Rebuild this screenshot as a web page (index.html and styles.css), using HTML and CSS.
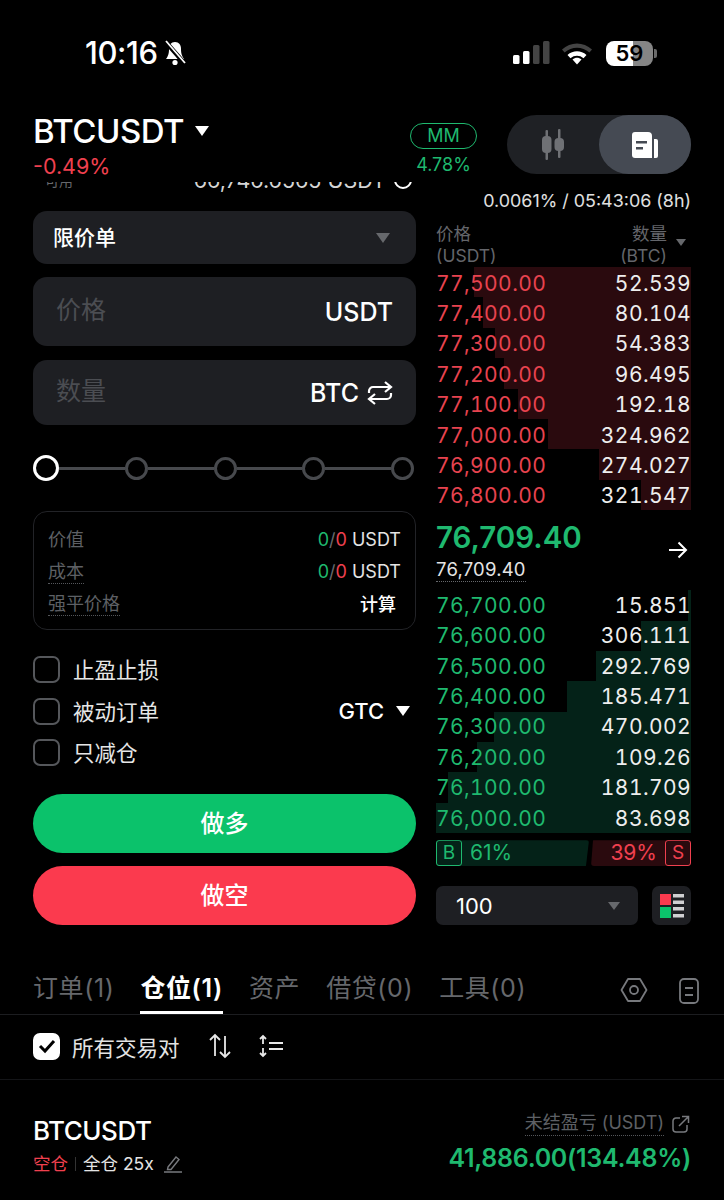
FILE: index.html
```html
<!DOCTYPE html>
<html lang="zh-CN">
<head>
    <meta charset="UTF-8">
    <meta name="viewport" content="width=device-width, initial-scale=1.0">
    <title>BTCUSDT</title>
    <link rel="stylesheet" href="styles.css">
</head>
<body>
    <div class="status-bar">
        <div class="status-left">
            <span class="clock">10:16</span>
            <svg class="bell" width="24" height="26" viewBox="0 0 24 26">
                <path d="M12 2c-4 0-6 3-6 7 0 5-1 7-3 10h18c-2-3-3-5-3-10 0-4-2-7-6-7z" fill="#fff"/>
                <circle cx="12" cy="22.5" r="2.6" fill="#fff"/>
                <path d="M2 1l20 23" stroke="#000" stroke-width="4.5"/>
                <path d="M3 1l19 22" stroke="#fff" stroke-width="1.8"/>
            </svg>
        </div>
        <div class="status-right">
            <svg width="38" height="24" viewBox="0 0 38 24">
                <rect x="0" y="14" width="6.500" height="9" rx="1.5" fill="#fff"/>
                <rect x="10" y="10" width="6.500" height="13" rx="1.5" fill="#fff"/>
                <rect x="20" y="4" width="6.500" height="19" rx="1.5" fill="#444"/>
                <rect x="30" y="0" width="6.500" height="23" rx="1.5" fill="#444"/>
            </svg>
            <svg width="32" height="24" viewBox="0 0 32 24">
                <path d="M1 8.500c8.500-8 21.500-8 30 0l-2.600 3c-7-6.500-17.800-6.500-24.800 0z" fill="#444"/>
                <path d="M6.500 14c5.500-5 13.500-5 19 0l-3 3.300c-3.800-3.300-9.200-3.300-13 0z" fill="#fff"/>
                <path d="M11.500 18.500c2.800-2.200 6.200-2.200 9 0L16 23.500z" fill="#fff"/>
            </svg>
            <div class="battery"><span>59</span></div>
            <div class="battery-cap"></div>
        </div>
    </div>

    <div class="header">
        <div class="symbol">
            <div class="symbol-name">BTCUSDT <span class="tri-white"></span></div>
            <div class="symbol-change">-0.49%</div>
        </div>
        <div class="margin-info">
            <div class="mm-badge">MM</div>
            <div class="mm-value">4.78%</div>
        </div>
        <div class="view-toggle">
            <div class="toggle-item">
                <svg width="28" height="32" viewBox="0 0 28 32" fill="#6f7175">
                    <rect x="6.500" y="1" width="2.500" height="30" rx="1"/>
                    <rect x="3" y="7" width="9.500" height="17" rx="4"/>
                    <rect x="19" y="0" width="2.500" height="29" rx="1"/>
                    <rect x="15.500" y="9" width="9.500" height="13" rx="4"/>
                </svg>
            </div>
            <div class="toggle-item toggle-active">
                <svg width="28" height="28" viewBox="0 0 28 28">
                    <path d="M4 1h13a4 4 0 0 1 4 4v22H4a3 3 0 0 1-3-3V4a3 3 0 0 1 3-3z" fill="#fff"/>
                    <path d="M23 8h2a2 2 0 0 1 2 2v15a2 2 0 0 1-2 2h-2z" fill="#fff"/>
                    <rect x="5" y="10" width="11" height="2.500" fill="#454a53"/>
                    <rect x="5" y="16" width="7" height="2.500" fill="#454a53"/>
                </svg>
            </div>
        </div>
    </div>

    <div class="trade">
        <div class="order-form">
            <div class="avail">
                <div class="avail-inner">
                    <span class="avail-label">可用</span>
                    <span class="avail-value">66,746.6565 USDT</span>
                    <span class="avail-icon"></span>
                </div>
            </div>

            <div class="select-box">
                <span class="select-text">限价单</span>
                <span class="tri-grey"></span>
            </div>
            <div class="field field-price">
                <span class="placeholder">价格</span>
                <span class="unit">USDT</span>
            </div>
            <div class="field field-qty">
                <span class="placeholder">数量</span>
                <span class="unit">BTC
                    <svg width="26" height="26" viewBox="0 0 26 26" fill="none" stroke="#fff" stroke-width="2.200">
                        <path d="M18 2l6 5-6 5M24 7H6a4 4 0 0 0-4 4v2M8 24l-6-5 6-5M2 19h18a4 4 0 0 0 4-4v-2"/>
                    </svg>
                </span>
            </div>

            <div class="slider">
                <span class="dot dot-active"></span><span class="line"></span>
                <span class="dot"></span><span class="line"></span>
                <span class="dot"></span><span class="line"></span>
                <span class="dot"></span><span class="line"></span>
                <span class="dot"></span>
            </div>

            <div class="summary">
                <div class="summary-row">
                    <span class="summary-label">价值</span>
                    <span><span class="green">0</span><span class="dim">/</span><span class="red">0</span> USDT</span>
                </div>
                <div class="summary-row">
                    <span class="summary-label dotted">成本</span>
                    <span><span class="green">0</span><span class="dim">/</span><span class="red">0</span> USDT</span>
                </div>
                <div class="summary-row">
                    <span class="summary-label dotted">强平价格</span>
                    <span class="calc">计算</span>
                </div>
            </div>

            <div class="options">
                <div class="option"><span class="checkbox"></span><span class="option-text">止盈止损</span></div>
                <div class="option">
                    <span class="checkbox"></span><span class="option-text">被动订单</span>
                    <span class="tif">GTC <span class="tri-white tri-small"></span></span>
                </div>
                <div class="option"><span class="checkbox"></span><span class="option-text">只减仓</span></div>
            </div>

            <div class="btn btn-long">做多</div>
            <div class="btn btn-short">做空</div>
        </div>

        <div class="book">
            <div class="funding">0.0061% / 05:43:06 (8h)</div>
            <div class="book-head">
                <div>价格<br>(USDT)</div>
                <div class="book-head-right">
                    <div>数量<br>(BTC)</div>
                    <span class="tri-grey tri-head"></span>
                </div>
            </div>

            <div class="rows asks">
                <div class="row"><i class="bar" style="width:85.1%"></i><span class="price">77,500.00</span><span class="qty">52.539</span></div>
                <div class="row"><i class="bar" style="width:81.6%"></i><span class="price">77,400.00</span><span class="qty">80.104</span></div>
                <div class="row"><i class="bar" style="width:76.9%"></i><span class="price">77,300.00</span><span class="qty">54.383</span></div>
                <div class="row"><i class="bar" style="width:73.3%"></i><span class="price">77,200.00</span><span class="qty">96.495</span></div>
                <div class="row"><i class="bar" style="width:67.8%"></i><span class="price">77,100.00</span><span class="qty">192.18</span></div>
                <div class="row"><i class="bar" style="width:56.1%"></i><span class="price">77,000.00</span><span class="qty">324.962</span></div>
                <div class="row"><i class="bar" style="width:36.1%"></i><span class="price">76,900.00</span><span class="qty">274.027</span></div>
                <div class="row"><i class="bar" style="width:19.6%"></i><span class="price">76,800.00</span><span class="qty">321.547</span></div>
            </div>

            <div class="mid">
                <div>
                    <div class="mid-price">76,709.40</div>
                    <div class="mid-mark">76,709.40</div>
                </div>
                <svg class="mid-arrow" width="20" height="18" viewBox="0 0 20 18" fill="none" stroke="#fff" stroke-width="2">
                    <path d="M1 9h17M10.500 1.500L18 9l-7.500 7.500"/>
                </svg>
            </div>

            <div class="rows bids">
                <div class="row"><i class="bar" style="width:1.2%"></i><span class="price">76,700.00</span><span class="qty">15.851</span></div>
                <div class="row"><i class="bar" style="width:19.6%"></i><span class="price">76,600.00</span><span class="qty">306.111</span></div>
                <div class="row"><i class="bar" style="width:37.3%"></i><span class="price">76,500.00</span><span class="qty">292.769</span></div>
                <div class="row"><i class="bar" style="width:48.6%"></i><span class="price">76,400.00</span><span class="qty">185.471</span></div>
                <div class="row"><i class="bar" style="width:77.3%"></i><span class="price">76,300.00</span><span class="qty">470.002</span></div>
                <div class="row"><i class="bar" style="width:83.9%"></i><span class="price">76,200.00</span><span class="qty">109.26</span></div>
                <div class="row"><i class="bar" style="width:95.3%"></i><span class="price">76,100.00</span><span class="qty">181.709</span></div>
                <div class="row"><i class="bar" style="width:100%"></i><span class="price">76,000.00</span><span class="qty">83.698</span></div>
            </div>

            <div class="ratio">
                <div class="ratio-buy"><span class="ratio-tag">B</span><span>61%</span></div>
                <div class="ratio-sell"><span>39%</span><span class="ratio-tag">S</span></div>
            </div>

            <div class="book-controls">
                <div class="depth-select">
                    <span>100</span>
                    <span class="tri-grey tri-depth"></span>
                </div>
                <div class="layout-btn">
                    <svg width="26" height="26" viewBox="0 0 26 26">
                        <rect x="1" y="1" width="11" height="11" fill="#fb3a4e"/>
                        <rect x="1" y="14" width="11" height="11" fill="#0bc26b"/>
                        <rect x="14" y="1" width="11" height="3.500" fill="#d0d0d2"/>
                        <rect x="14" y="7.500" width="11" height="3.500" fill="#d0d0d2"/>
                        <rect x="14" y="14" width="11" height="3.500" fill="#d0d0d2"/>
                        <rect x="14" y="21" width="11" height="3.500" fill="#d0d0d2"/>
                    </svg>
                </div>
            </div>
        </div>
    </div>

    <div class="tabs">
        <div class="tab">订单(1)</div>
        <div class="tab tab-active">仓位(1)</div>
        <div class="tab">资产</div>
        <div class="tab">借贷(0)</div>
        <div class="tab">工具(0)</div>
        <div class="tab-icons">
            <svg width="28" height="26" viewBox="0 0 28 26" fill="none" stroke="#77797d" stroke-width="1.800">
                <path d="M8 2h12l6.500 11L20 24H8L1.500 13z" stroke-linejoin="round"/>
                <circle cx="14" cy="13" r="4"/>
            </svg>
            <svg width="22" height="28" viewBox="0 0 22 28" fill="none" stroke="#77797d" stroke-width="1.800">
                <rect x="2" y="2" width="18" height="24" rx="4"/>
                <path d="M7 11h8M7 18h8"/>
            </svg>
        </div>
    </div>

    <div class="toolbar">
        <span class="checkbox checkbox-on">
            <svg width="18" height="16" viewBox="0 0 18 16" fill="none" stroke="#000" stroke-width="3">
                <path d="M2 8l5 5 9-10"/>
            </svg>
        </span>
        <span class="toolbar-label">所有交易对</span>
        <svg class="tool-sort" width="24" height="26" viewBox="0 0 24 26" fill="none" stroke="#e8e8e8" stroke-width="1.800">
            <path d="M7 23V2M2 7l5-5 5 5M17 3v21M12 19l5 5 5-5"/>
        </svg>
        <svg class="tool-filter" width="26" height="24" viewBox="0 0 26 24" fill="none" stroke="#e8e8e8" stroke-width="1.800">
            <path d="M5 10V2M2 5l3-3 3 3M5 14v8M2 19l3 3 3-3M11 9h14M11 15h14"/>
        </svg>
    </div>

    <div class="position">
        <div>
            <div class="pos-symbol">BTCUSDT</div>
            <div class="pos-tags">
                <span class="red">空仓</span>
                <span class="pos-sep"></span>
                <span>全仓 25x</span>
                <svg class="pos-edit" width="20" height="18" viewBox="0 0 20 18" fill="none" stroke="#77797d" stroke-width="1.400">
                    <path d="M5 12L13 2l3 2.500-8 10-3.500 0zM1 17h18"/>
                </svg>
            </div>
        </div>
        <div class="pos-right">
            <div class="pnl-label">
                <span class="dotted">未结盈亏 (USDT)</span>
                <svg width="18" height="18" viewBox="0 0 18 18" fill="none" stroke="#77797d" stroke-width="1.500">
                    <path d="M8 3H4a3 3 0 0 0-3 3v8a3 3 0 0 0 3 3h8a3 3 0 0 0 3-3v-4M7 11L16 2M10 1.500h6.500V8"/>
                </svg>
            </div>
            <div class="pnl-value">41,886.00(134.48%)</div>
        </div>
    </div>
</body>
</html>
```

FILE: styles.css
```css
body {
    margin: 0;
    width: 724px;
    height: 1200px;
    overflow: hidden;
    background: #000;
    color: #fff;
    font-family: Inter, "Noto Sans CJK SC", sans-serif;
}
.green {
    color: #1fb96f;
}
.red {
    color: #f0404f;
}
.dim {
    color: #66686c;
}
.dotted {
    border-bottom: 1px dotted #55575b;
}

/* triangles */
.tri-white, .tri-grey {
    display: inline-block;
    width: 0;
    height: 0;
    border-left: 7px solid transparent;
    border-right: 7px solid transparent;
}
.tri-white {
    border-top: 10px solid #fff;
}
.tri-grey {
    border-top: 10px solid #66686c;
}

/* status bar */
.status-bar {
    height: 108px;
    display: flex;
    justify-content: space-between;
    align-items: flex-start;
    padding: 37px 67px 0 85px;
    box-sizing: border-box;
}
.status-left {
    display: flex;
    align-items: center;
    gap: 5px;
}
.clock {
    font-size: 31px;
    font-weight: 500;
    line-height: 32px;
    letter-spacing: -0.4px;
}
.status-right {
    display: flex;
    align-items: center;
    gap: 10px;
    height: 32px;
}
.battery {
    width: 47px;
    height: 25px;
    margin-left: 3px;
    border-radius: 8px;
    background: linear-gradient(90deg, #fff 0, #fff 58%, #858585 58%, #858585 100%);
    color: #000;
    font-size: 22px;
    font-weight: 600;
    line-height: 25px;
    text-align: center;
}
.battery-cap {
    width: 3px;
    height: 9px;
    margin-left: -9px;
    border-radius: 0 2px 2px 0;
    background: #6a6a6a;
}

/* header */
.header {
    height: 70px;
    padding: 7px 33px 0;
    box-sizing: border-box;
    display: flex;
    align-items: flex-start;
}
.symbol {
    flex-grow: 1;
}
.symbol-name {
    font-size: 33px;
    font-weight: 500;
    line-height: 30px;
    margin-top: 1px;
    letter-spacing: -0.5px;
}
.symbol-name .tri-white {
    vertical-align: 7px;
    margin-left: 3px;
}
.symbol-change {
    font-size: 21.500px;
    line-height: 26px;
    color: #f0404f;
    margin-top: 7px;
}
.margin-info {
    width: 67px;
    margin-top: 8px;
    margin-right: 30px;
    text-align: center;
}
.mm-badge {
    height: 24px;
    border: 1px solid #1fb96f;
    border-radius: 13px;
    color: #1fb96f;
    font-size: 18px;
    line-height: 24px;
}
.mm-value {
    margin-top: 4px;
    font-size: 18px;
    line-height: 24px;
    color: #1fb96f;
}
.view-toggle {
    width: 184px;
    height: 59px;
    display: flex;
    background: #1f2125;
    border-radius: 30px;
}
.toggle-item {
    width: 92px;
    display: flex;
    align-items: center;
    justify-content: center;
}
.toggle-active {
    background: #454a53;
    border-radius: 30px;
}

/* two columns */
.trade {
    display: flex;
    gap: 20px;
    padding: 0 33px;
}
.order-form {
    width: 383px;
}
.book {
    width: 255px;
}

/* order form, the balance row is cut off by the scroll area above it */
.avail {
    height: 11px;
    overflow: hidden;
    margin-top: 4px;
    margin-bottom: 18px;
}
.avail-inner {
    display: flex;
    align-items: center;
    height: 26px;
    margin-top: -15px;
    padding: 0 4px 0 12px;
    font-size: 21.500px;
    color: #d5d5d5;
}
.avail-label {
    flex-grow: 1;
    font-size: 14px;
    color: #66686c;
}
.avail-value {
    margin-right: 8px;
}
.avail-icon {
    width: 14px;
    height: 14px;
    border: 2px solid #fff;
    border-radius: 50%;
}
.select-box {
    height: 53px;
    padding: 0 26px 0 20px;
    display: flex;
    align-items: center;
    justify-content: space-between;
    background: #1e1f23;
    border-radius: 14px;
    font-size: 21px;
    font-weight: 500;
}
.select-text {
    margin-bottom: 4px;
}
.field {
    padding: 0 23px 0 23px;
    display: flex;
    align-items: center;
    justify-content: space-between;
    background: #1e1f23;
    border-radius: 14px;
}
.field-price {
    height: 69px;
    margin-top: 13px;
}
.field-qty {
    height: 65px;
    margin-top: 14px;
}
.placeholder {
    margin-bottom: 7px;
    font-size: 25px;
    color: #4b4d52;
}
.unit {
    display: flex;
    align-items: center;
    gap: 8px;
    font-size: 25px;
    font-weight: 500;
}
.slider {
    height: 26px;
    margin-top: 30px;
    padding-right: 2px;
    display: flex;
    align-items: center;
}
.dot {
    flex-shrink: 0;
    width: 23px;
    height: 23px;
    box-sizing: border-box;
    border: 3px solid #47494d;
    border-radius: 50%;
}
.dot-active {
    width: 26px;
    height: 26px;
    border-color: #fff;
}
.line {
    flex-grow: 1;
    height: 3px;
    background: #47494d;
}
.summary {
    height: 119px;
    margin-top: 30px;
    padding: 11px 14px 0;
    box-sizing: border-box;
    border: 1.5px solid #222327;
    border-radius: 14px;
}
.summary-row {
    height: 32px;
    display: flex;
    align-items: center;
    justify-content: space-between;
    font-size: 18px;
    color: #e4e4e4;
}
.summary-label {
    margin-bottom: 2px;
    color: #5e6065;
}
.calc {
    margin-right: 5px;
    color: #fff;
    font-weight: 500;
}
.options {
    margin-top: 19px;
}
.option {
    height: 41.500px;
    display: flex;
    align-items: center;
    gap: 13px;
    font-size: 21.500px;
    color: #e6e6e6;
}
.option-text {
    margin-bottom: 2px;
}
.checkbox {
    flex-shrink: 0;
    width: 27px;
    height: 27px;
    box-sizing: border-box;
    border: 2px solid #55575b;
    border-radius: 7px;
}
.tif {
    margin-left: auto;
    margin-right: 6px;
    font-size: 22px;
    font-weight: 500;
    color: #fff;
}
.tif .tri-small {
    margin-left: 6px;
    vertical-align: 3px;
}
.btn {
    height: 59px;
    padding-bottom: 4px;
    box-sizing: border-box;
    display: flex;
    align-items: center;
    justify-content: center;
    border-radius: 30px;
    font-size: 24px;
    font-weight: 500;
}
.btn-long {
    margin-top: 20px;
    background: #0bc26b;
}
.btn-short {
    margin-top: 13px;
    background: #fb3a4e;
}

/* order book */
.funding {
    margin-top: 11px;
    height: 23px;
    font-size: 17.900px;
    line-height: 23px;
    text-align: right;
    color: #e0e0e0;
    white-space: nowrap;
}
.book-head {
    height: 44px;
    margin-top: 11px;
    display: flex;
    justify-content: space-between;
    font-size: 17.500px;
    line-height: 22px;
    color: #64666b;
}
.book-head-right {
    display: flex;
    text-align: right;
}
.tri-head {
    margin: 16px 5px 0 9px;
    border-left-width: 5px;
    border-right-width: 5px;
    border-top-width: 7px;
}
.row {
    position: relative;
    height: 30.400px;
    box-sizing: border-box;
    display: flex;
    align-items: center;
    justify-content: space-between;
    font-size: 21px;
    letter-spacing: 0.4px;
    font-variant-numeric: tabular-nums;
}
.asks .row {
    padding-top: 2px;
}
.bar {
    position: absolute;
    right: 0;
    top: 0;
    bottom: 0;
}
.price, .qty {
    position: relative;
}
.qty {
    color: #eee;
}
.asks .bar {
    background: #2a0a0e;
}
.asks .price {
    color: #e8434f;
}
.bids .bar {
    background: #042218;
}
.bids .price {
    color: #1fb96f;
}
.mid {
    height: 80px;
    padding-bottom: 2px;
    box-sizing: border-box;
    display: flex;
    align-items: center;
    justify-content: space-between;
}
.mid-price {
    font-size: 29.500px;
    font-weight: 600;
    line-height: 36px;
    margin-top: 2px;
    color: #1fb96f;
}
.mid-mark {
    display: inline-block;
    margin-top: 3px;
    padding-bottom: 1px;
    font-size: 18.500px;
    line-height: 22px;
    letter-spacing: 0.2px;
    color: #e4e4e4;
    border-bottom: 1px dotted #66686c;
}
.mid-arrow {
    margin: 2px 3px 0 0;
}
.ratio {
    height: 26px;
    margin-top: 7px;
    display: flex;
    gap: 2px;
    font-size: 21px;
    line-height: 26px;
}
.ratio-buy, .ratio-sell {
    display: flex;
    gap: 8px;
}
.ratio-buy {
    width: 153px;
    background: #042218;
    border-radius: 3px;
    color: #1fb96f;
    clip-path: polygon(0 0, 100% 0, 98% 100%, 0 100%);
}
.ratio-sell {
    flex-grow: 1;
    justify-content: flex-end;
    background: #2a0a0e;
    border-radius: 3px;
    color: #f0404f;
    clip-path: polygon(2% 0, 100% 0, 100% 100%, 0 100%);
}
.ratio-tag {
    width: 26px;
    height: 26px;
    box-sizing: border-box;
    border: 1.500px solid currentColor;
    border-radius: 3px;
    font-size: 19px;
    line-height: 23px;
    text-align: center;
}
.book-controls {
    margin-top: 20px;
    display: flex;
    justify-content: space-between;
}
.depth-select {
    width: 202px;
    height: 39px;
    padding: 0 18px 0 20px;
    box-sizing: border-box;
    display: flex;
    align-items: center;
    justify-content: space-between;
    background: #1e1f23;
    border-radius: 7px;
    font-size: 22px;
}
.tri-depth {
    border-left-width: 6px;
    border-right-width: 6px;
    border-top-width: 8px;
}
.layout-btn {
    width: 39px;
    height: 39px;
    display: flex;
    align-items: center;
    justify-content: center;
    background: #1e1f23;
    border-radius: 7px;
}

/* tabs */
.tabs {
    height: 42px;
    margin-top: 47px;
    padding: 0 33px;
    display: flex;
    gap: 26px;
    border-bottom: 1px solid #1c1d20;
    font-size: 25px;
    line-height: 33px;
    letter-spacing: 0.6px;
    color: #66686c;
}
.tab {
    white-space: nowrap;
}
.tab-active {
    height: 42px;
    box-sizing: border-box;
    border-bottom: 3px solid #fff;
    color: #fff;
    font-weight: 600;
}
.tab-icons {
    margin-left: auto;
    margin-right: -9px;
    display: flex;
    align-items: flex-start;
    gap: 30px;
    padding-top: 5px;
}

/* toolbar */
.toolbar {
    height: 65px;
    padding: 0 33px 2px;
    box-sizing: border-box;
    display: flex;
    align-items: center;
    border-bottom: 1px solid #141518;
}
.checkbox-on {
    display: flex;
    align-items: center;
    justify-content: center;
    background: #fff;
    border-color: #fff;
}
.toolbar-label {
    margin-left: 12px;
    font-size: 21.500px;
    color: #e4e4e4;
}
.tool-sort {
    margin-left: 28px;
}
.tool-filter {
    margin-left: 26px;
}

/* position */
.position {
    padding: 31px 33px 0;
    display: flex;
    justify-content: space-between;
}
.pos-symbol {
    margin-top: 3px;
    font-size: 26px;
    font-weight: 500;
    line-height: 34px;
    letter-spacing: -0.5px;
}
.pos-tags {
    margin-top: 3px;
    display: flex;
    align-items: center;
    gap: 7px;
    font-size: 17.500px;
    line-height: 26px;
    color: #e4e4e4;
}
.pos-sep {
    width: 1px;
    height: 14px;
    background: #333;
}
.pos-edit {
    margin-left: 2px;
}
.pos-right {
    text-align: right;
}
.pnl-label {
    display: flex;
    justify-content: flex-end;
    align-items: center;
    gap: 8px;
    padding-right: 1px;
    font-size: 18px;
    line-height: 24px;
    color: #5e6065;
}
.pnl-value {
    margin-top: 6px;
    font-size: 25px;
    font-weight: 600;
    line-height: 32px;
    color: #1fb96f;
    letter-spacing: -0.3px;
}
```
